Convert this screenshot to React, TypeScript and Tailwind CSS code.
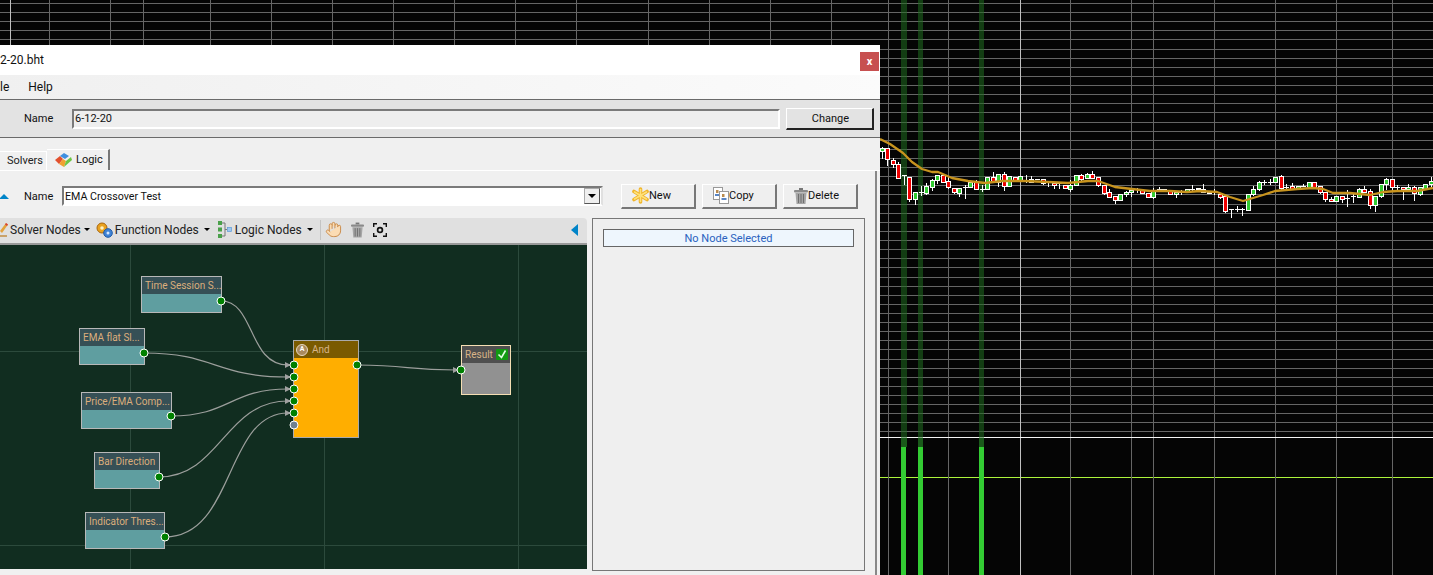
import type { ReactNode } from 'react';
import { Hand } from 'lucide-react';

type Candle = [string, number, number, number, number];

// kind, body top, body bottom, wick top, wick bottom (in 3x crop units, y offset from 130)
const candles: Candle[] = [
  ['g', 55, 62, 50, 88], ['r', 55, 88, 55, 108], ['r', 91, 103, 85, 113], ['r', 103, 143, 97, 148],
  ['d', 136, 138, 136, 165], ['r', 142, 208, 142, 215], ['g', 187, 208, 187, 224], ['d', 187, 189, 168, 197],
  ['g', 168, 188, 160, 195], ['g', 151, 170, 148, 183], ['g', 136, 151, 136, 162], ['r', 136, 155, 136, 155],
  ['r', 154, 172, 140, 178], ['r', 175, 187, 175, 192], ['g', 175, 188, 175, 200], ['d', 172, 174, 165, 207],
  ['g', 157, 172, 155, 175], ['r', 157, 178, 150, 180], ['d', 178, 180, 165, 185], ['g', 142, 178, 142, 178],
  ['r', 142, 155, 127, 160], ['g', 133, 155, 133, 170], ['r', 133, 168, 125, 183], ['g', 139, 169, 139, 170],
  ['r', 142, 153, 142, 153], ['g', 139, 153, 139, 153], ['d', 151, 153, 135, 160], ['g', 146, 155, 138, 160],
  ['d', 146, 151, 146, 151], ['r', 148, 160, 148, 165], ['d', 155, 160, 155, 170], ['r', 158, 165, 158, 177],
  ['d', 160, 163, 160, 177], ['r', 166, 175, 166, 175], ['g', 166, 176, 150, 186], ['g', 136, 166, 136, 166],
  ['r', 136, 146, 133, 155], ['g', 133, 143, 130, 147], ['r', 133, 143, 124, 148], ['r', 142, 166, 142, 170],
  ['r', 166, 188, 166, 195], ['r', 187, 200, 178, 205], ['r', 199, 211, 199, 222], ['g', 193, 211, 193, 211],
  ['g', 187, 193, 183, 200], ['g', 181, 187, 175, 200], ['d', 178, 181, 175, 188], ['r', 181, 190, 181, 190],
  ['r', 190, 200, 190, 205], ['g', 184, 200, 175, 208], ['d', 178, 181, 170, 185], ['d', 178, 185, 178, 185],
  ['r', 183, 193, 183, 193], ['g', 185, 192, 185, 205], ['d', 185, 187, 180, 195], ['g', 178, 185, 178, 185],
  ['d', 178, 181, 165, 183], ['d', 175, 181, 175, 181], ['r', 176, 186, 163, 186], ['d', 183, 193, 183, 193],
  ['d', 185, 187, 178, 195], ['r', 192, 200, 192, 208], ['r', 199, 242, 199, 248], ['d', 238, 240, 238, 263],
  ['d', 238, 240, 228, 245], ['d', 238, 240, 235, 258], ['g', 193, 241, 193, 241], ['g', 178, 193, 168, 197],
  ['g', 157, 178, 154, 183], ['d', 157, 160, 150, 165], ['d', 157, 160, 148, 165], ['g', 142, 157, 142, 157],
  ['r', 139, 173, 136, 180], ['d', 170, 172, 163, 178], ['r', 169, 176, 160, 176], ['g', 169, 176, 169, 176],
  ['d', 167, 169, 162, 172], ['g', 157, 170, 157, 170], ['r', 157, 170, 157, 170], ['r', 169, 187, 169, 192],
  ['r', 187, 208, 187, 215], ['r', 208, 214, 200, 217], ['g', 199, 214, 199, 214], ['r', 199, 208, 199, 218],
  ['d', 203, 205, 180, 230], ['d', 198, 200, 190, 218], ['g', 178, 200, 175, 205], ['r', 178, 187, 168, 190],
  ['r', 184, 224, 178, 237], ['g', 199, 224, 199, 245], ['g', 163, 199, 163, 205], ['g', 148, 163, 145, 180],
  ['r', 148, 170, 148, 185], ['d', 170, 172, 165, 185], ['r', 172, 178, 172, 210], ['g', 172, 178, 163, 178],
  ['r', 172, 190, 168, 213], ['g', 172, 193, 172, 197], ['g', 163, 176, 163, 180], ['g', 154, 163, 141, 170],
];

const emaPoints = [
  [880, 139], [890, 144], [903, 153], [912, 162], [922, 169], [932, 172], [938, 172], [952, 178], [968, 181],
  [985, 183], [1002, 181], [1025, 181], [1048, 182], [1068, 183], [1088, 181], [1098, 181], [1115, 187],
  [1132, 189], [1150, 191], [1170, 191], [1187, 192], [1200, 191], [1217, 192], [1230, 197], [1243, 201],
  [1253, 198], [1263, 195], [1275, 191], [1297, 189], [1313, 188], [1323, 189], [1333, 193], [1350, 193],
  [1370, 195], [1383, 192], [1397, 191], [1417, 191], [1433, 188],
];

const vLines = [49, 110, 143, 210, 271, 332, 393, 454, 515, 576, 648, 709, 770, 831, 888, 948, 1070, 1131, 1153, 1214, 1275, 1336, 1392];

function Chart() {
  const hLines = Array.from({ length: 48 }, (_, i) => Math.round(3 + i * 9.117) + 0.5);
  return (
    <svg className="absolute inset-0" width={1433} height={575}>
      {hLines.map((y) => (
        <line key={y} x1={0} x2={1433} y1={y} y2={y} stroke="#666" />
      ))}
      <line x1={0} x2={1433} y1={477.5} y2={477.5} stroke="#adf53c" />
      {vLines.map((x) => (
        <line key={x} x1={x + 0.5} x2={x + 0.5} y1={0} y2={575} stroke="#666" />
      ))}
      {[10, 1020].map((x) => (
        <line key={x} x1={x + 0.5} x2={x + 0.5} y1={0} y2={575} stroke="#c0c0c0" />
      ))}
      <line x1={0} x2={1433} y1={437.5} y2={437.5} stroke="#f5f5f5" />
      {[[901, 6], [918, 5], [979, 5]].map(([x, w]) => (
        <g key={x}>
          <rect x={x} y={0} width={w} height={447} fill="#1f6b1f" opacity={0.55} />
          <rect x={x} y={438} width={w} height={9} fill="#1a5a1a" />
          <rect x={x} y={447} width={5} height={128} fill="#33cc33" />
        </g>
      ))}
      {candles.map(([k, bt, bb, wt, wb], i) => {
        const x = Math.round(881.7 + i * 5.545) + 0.5;
        const y = (v: number) => Math.round(130 + v / 3);
        return (
          <g key={i}>
            <line x1={x} x2={x} y1={y(wt)} y2={y(wb)} stroke="#fff" />
            {k === 'd' ? (
              <rect x={x - 2.5} y={y(bt)} width={5} height={Math.max(1, y(bb) - y(bt))} fill="#fff" />
            ) : (
              <rect x={x - 2} y={y(bt) + 0.5} width={4} height={Math.max(1, y(bb) - y(bt))} fill={k === 'r' ? '#ee0000' : '#33cc33'} stroke="#fff" />
            )}
          </g>
        );
      })}
      <polyline points={emaPoints.map((p) => p.join(',')).join(' ')} fill="none" stroke="#c8941e" strokeWidth={2.3} strokeLinejoin="round" />
    </svg>
  );
}

function Caret({ ml }: { ml: string }) {
  return <span className={`${ml} h-0 w-0 border-x-[3px] border-t-[3px] border-x-transparent border-t-black`} />;
}

function ActionButton({ icon, label }: { icon: ReactNode; label: string }) {
  return (
    <button className="flex h-[25px] w-[75px] items-center border-t border-l border-white border-r-2 border-b-2 border-r-[#777] border-b-[#777] bg-[#efefef] pl-[10px]">
      {icon}
      <span className="pt-[2px]">{label}</span>
    </button>
  );
}

function StarIcon() {
  return (
    <svg width="17" height="17" viewBox="0 0 17 17">
      <g stroke="#f0b429" strokeWidth="3.6" strokeLinecap="round">
        <line x1="8.5" y1="2" x2="8.5" y2="15" />
        <line x1="2" y1="4.5" x2="15" y2="12.5" />
        <line x1="2" y1="12.5" x2="15" y2="4.5" />
      </g>
      <g stroke="#ffe27a" strokeWidth="1.6" strokeLinecap="round">
        <line x1="8.5" y1="2.5" x2="8.5" y2="14.5" />
        <line x1="2.5" y1="5" x2="14.5" y2="12" />
        <line x1="2.5" y1="12" x2="14.5" y2="5" />
      </g>
    </svg>
  );
}

function CopyIcon() {
  return (
    <svg width="16" height="17" viewBox="0 0 16 17">
      <rect x="0.5" y="0.5" width="9" height="12" fill="#fff" stroke="#999" />
      <rect x="3" y="3" width="2.5" height="3" fill="#b98b4e" />
      <rect x="2" y="7" width="5" height="2" fill="#5a86c5" />
      <rect x="6.5" y="4.5" width="9" height="12" fill="#fff" stroke="#999" />
      <rect x="9" y="7" width="2.5" height="3" fill="#b98b4e" />
      <rect x="8.5" y="11" width="5" height="2" fill="#5a86c5" />
    </svg>
  );
}

function TrashIcon({ w = 14, h = 16 }: { w?: number; h?: number }) {
  return (
    <svg width={w} height={h} viewBox="0 0 14 16">
      <rect x="5" y="0" width="4" height="2" fill="#777" />
      <rect x="0" y="2" width="14" height="2.5" rx="1" fill="#8a8a8a" />
      <path d="M1.5 5h11l-1 11h-9z" fill="#a5a5a5" />
      <path d="M4.5 6v9M7 6v9M9.5 6v9" stroke="#6f6f6f" strokeWidth="1" />
    </svg>
  );
}

function LogicTabIcon() {
  return (
    <svg width="17" height="15" viewBox="0 0 17 15">
      <path d="M0 7l5-4 3 3-4 5z" fill="#e2502e" />
      <path d="M5 3l4-3 5 3-4 3z" fill="#3f8fe0" />
      <path d="M4 11l4-5 3 2-2 6z" fill="#f0a030" />
      <path d="M9 14l2-6 5-4 1 3z" fill="#6cc644" />
    </svg>
  );
}

function GearsIcon() {
  return (
    <svg width="17" height="16" viewBox="0 0 17 16">
      <circle cx="6" cy="6" r="5" fill="#e9a21f" stroke="#a8660f" />
      <circle cx="6" cy="6" r="1.8" fill="#fff3c4" />
      <circle cx="12" cy="11" r="4.3" fill="#3f83d6" stroke="#1f5aa5" />
      <circle cx="12" cy="11" r="1.5" fill="#d7e9ff" />
    </svg>
  );
}

function LogicNodesIcon() {
  return (
    <svg width="14" height="17" viewBox="0 0 14 17">
      <rect x="0" y="0" width="4" height="4" fill="#4aa04a" />
      <rect x="0" y="6.5" width="4" height="4" fill="#4aa04a" />
      <rect x="0" y="13" width="4" height="4" fill="#4aa04a" />
      <path d="M4 2h3v13H4M7 8.5h2" fill="none" stroke="#777" />
      <rect x="9.5" y="6.5" width="4" height="4" fill="#9cc7ef" stroke="#5f9ad6" strokeWidth="0.7" />
    </svg>
  );
}

function PencilIcon() {
  return (
    <svg width="8" height="15" viewBox="0 0 8 15">
      <path d="M0 9L6 1l2 1.5L2 11z" fill="#e3a23c" />
      <path d="M6 1l2 1.5L7 4 5 2.5z" fill="#d8413a" />
      <path d="M0 13h7v2H0z" fill="#c9a26b" />
    </svg>
  );
}

function FocusIcon() {
  return (
    <svg width="14" height="14" viewBox="0 0 14 14" fill="none" stroke="#111" strokeWidth="1.4">
      <path d="M0.7 4V0.7H4M10 0.7h3.3V4M13.3 10v3.3H10M4 13.3H0.7V10" />
      <circle cx="7" cy="7" r="2.4" strokeWidth="1.7" />
    </svg>
  );
}

function Port({ x, y, grey }: { x: number; y: number; grey?: boolean }) {
  return (
    <span
      className={`absolute h-[9px] w-[9px] -translate-x-1/2 -translate-y-1/2 rounded-full border border-white ${grey ? 'bg-[#708090]' : 'bg-[#008000]'}`}
      style={{ left: x, top: y - 245 }}
    />
  );
}

function GraphNode({ label, x, y, w, h }: { label: string; x: number; y: number; w: number; h: number }) {
  return (
    <div
      className="absolute flex flex-col border border-[#b8b8b8] bg-[#5f9ea0]"
      style={{ left: x, top: y - 245, width: w, height: h }}
    >
      <div className="flex h-[17px] items-center whitespace-nowrap bg-[#365056] pl-[3px] text-[10px] text-[#dcae7c]">{label}</div>
    </div>
  );
}

const wires = [
  'M221 301C255 301 248 365 288 365',
  'M144 353C215 353 215 377 288 377',
  'M171 416C230 416 230 389 288 389',
  'M159 477C220 477 225 401 288 401',
  'M165 537C235 537 225 413 288 413',
  'M357 365C410 365 405 370 456 370',
];

function Canvas() {
  return (
    <div className="relative h-[324px] w-[587px] overflow-hidden bg-[#112d20]">
      <svg className="absolute inset-0" width={587} height={324} viewBox="0 245 587 324">
        {[130, 324, 518].map((x) => (
          <line key={x} x1={x + 0.5} x2={x + 0.5} y1={245} y2={569} stroke="#2c4a3c" />
        ))}
        {[351, 545].map((y) => (
          <line key={y} x1={0} x2={587} y1={y + 0.5} y2={y + 0.5} stroke="#2c4a3c" />
        ))}
      </svg>
      <GraphNode label="Time Session S..." x={141} y={276} w={81} h={37} />
      <GraphNode label="EMA flat Sl..." x={79} y={328} w={66} h={37} />
      <GraphNode label="Price/EMA Comp..." x={81} y={392} w={91} h={37} />
      <GraphNode label="Bar Direction" x={94} y={452} w={66} h={37} />
      <GraphNode label="Indicator Thres..." x={85} y={512} w={80} h={37} />

      <div className="absolute left-[293px] top-[95px] flex h-[98px] w-[66px] flex-col border border-[#aaa] bg-[#ffae00]">
        <div className="flex h-[17px] items-center gap-[4px] bg-[#7a5a00] pl-[2px] text-[10px] text-[#d8b488]">
          <span className="flex h-[12px] w-[12px] items-center justify-center rounded-full border border-[#e8d8c0] bg-[#a98a5e] text-[7px] font-bold text-white">A</span>
          And
        </div>
      </div>

      <div className="absolute left-[461px] top-[100px] flex h-[50px] w-[50px] flex-col border border-[#f5deb3] bg-[#919191]">
        <div className="flex h-[17px] items-center gap-[3px] bg-[#4f4f4f] pl-[3px] text-[10px] text-[#d8b488]">
          <span className="-mt-px">Result</span>
          <svg width="12" height="11" viewBox="0 0 12 11">
            <rect width="12" height="11" rx="1" fill="#129a12" />
            <path d="M2.5 5.5l3 3 4-7" fill="none" stroke="#e4ffe4" strokeWidth="1.6" />
          </svg>
        </div>
      </div>

      <svg className="absolute inset-0" width={587} height={324} viewBox="0 245 587 324">
        {wires.map((d) => (
          <path key={d} d={d} fill="none" stroke="#9c9f9c" strokeWidth={1.2} />
        ))}
        {[365, 377, 389, 401, 413].map((y) => (
          <path key={y} d={`M285 ${y - 3}l6 3-6 3z`} fill="#a0a0a0" />
        ))}
        <path d="M453 367l6 3-6 3z" fill="#a0a0a0" />
      </svg>

      {[365, 377, 389, 401, 413].map((y) => (
        <Port key={y} x={294} y={y} />
      ))}
      <Port x={294} y={425} grey />
      <Port x={357} y={365} />
      <Port x={461} y={370} />
      <Port x={221} y={301} />
      <Port x={144} y={353} />
      <Port x={171} y={416} />
      <Port x={159} y={477} />
      <Port x={165} y={537} />
    </div>
  );
}

export default function App() {
  return (
    <div className="relative h-[575px] w-[1433px] overflow-hidden bg-[#050505] font-['Roboto',sans-serif] text-[11px] text-[#111]">
      <Chart />

      {/* Dialog window */}
      <div className="absolute left-0 top-[45px] flex h-[530px] w-[880px] flex-col bg-[#f0f0f0]">
        <div className="flex h-[30px] items-start justify-between bg-white">
          <span className="mt-[6px] text-[12px] leading-[18px]">2-20.bht</span>
          <span className="mr-px mt-[7px] flex h-[19px] w-[19px] items-center justify-center bg-[#c75050] text-[11px] font-bold leading-none text-white">x</span>
        </div>

        <div className="flex h-[24px] items-center gap-[19px] bg-gradient-to-r from-[#f0f0f0] to-[#fbfbfb] text-[12px]">
          <span>le</span>
          <span>Help</span>
        </div>

        <div className="flex h-[39px] items-center border-y border-[#6a6a6a] bg-[#e3e3e3] pl-[24px]">
          <span className="w-[48px] pt-[2px]">Name</span>
          <div className="flex h-[20px] w-[708px] items-center border-2 border-t-[#7a7a7a] border-l-[#7a7a7a] border-r-white border-b-white bg-[#eeeeee] pl-[1px] pt-[2px]">6-12-20</div>
          <button className="ml-[6px] h-[22px] w-[88px] border-t border-l border-white border-r-2 border-b-2 border-r-[#222] border-b-[#222] bg-[#e3e3e3] pt-[2px] pl-[2px]">Change</button>
        </div>

        <div className="flex h-[32px] items-end">
          <div className="flex h-[19px] w-[47px] items-center border-t border-r border-white pl-[7px] text-[#222]">Solvers</div>
          <div className="flex h-[21px] w-[63px] items-center gap-[4px] border-t border-white border-r-2 border-r-[#777] pl-[8px]">
            <LogicTabIcon />
            Logic
          </div>
        </div>

        <div className="flex min-h-0 flex-1 flex-col border-t border-white pr-[3px]">
          <div className="flex flex-1 flex-col border-r-2 border-[#888]">
            <div className="flex h-[47px] items-center pt-[3px]">
              <span className="mr-[15px] h-0 w-0 border-x-[5px] border-b-[5px] border-x-transparent border-b-[#0084c8] -ml-px" />
              <span className="w-[38px] pt-[2px]">Name</span>
              <div className="flex h-[20px] w-[541px] items-center justify-between border-2 border-t-[#7a7a7a] border-l-[#7a7a7a] border-r-[#e0e0e0] border-b-white bg-white pl-[1px]">
                <span className="pt-[2px] text-[10.7px]">EMA Crossover Test</span>
                <span className="mr-px flex h-[16px] w-[16px] items-center justify-center border border-[#aaa] border-r-[#555] border-b-[#555] bg-[#efefef]">
                  <span className="h-0 w-0 border-x-[4px] border-t-[4px] border-x-transparent border-t-black" />
                </span>
              </div>
              <div className="ml-[18px] flex gap-[6px]">
                <ActionButton icon={<StarIcon />} label="New" />
                <ActionButton icon={<CopyIcon />} label="Copy" />
                <ActionButton icon={<TrashIcon />} label="Delete" />
              </div>
            </div>

            <div className="flex flex-1 items-start">
              <div className="flex w-[587px] flex-col">
                <div className="flex h-[27px] items-center rounded-tr-[4px] border-b-2 border-[#999] bg-[#e0e0e0] pb-[2px] text-[12px] text-[#222]">
                  <PencilIcon />
                  <span className="ml-[2px]">Solver Nodes</span>
                  <Caret ml="ml-[3px]" />
                  <span className="ml-[6px]"><GearsIcon /></span>
                  <span className="ml-[2px]">Function Nodes</span>
                  <Caret ml="ml-[5px]" />
                  <span className="ml-[8px]"><LogicNodesIcon /></span>
                  <span className="ml-[3px]">Logic Nodes</span>
                  <Caret ml="ml-[5px]" />
                  <span className="ml-[7px] h-[20px] w-px bg-[#c4c4c4]" />
                  <Hand size={17} strokeWidth={1.4} className="ml-[4px] fill-[#fbdcb4] text-[#c98c4c]" />
                  <span className="ml-[9px]"><TrashIcon w={13} h={16} /></span>
                  <span className="ml-[9px]"><FocusIcon /></span>
                  <span className="ml-auto mr-[9px] h-0 w-0 border-y-[6px] border-r-[7px] border-y-transparent border-r-[#0084c8]" />
                </div>
                <Canvas />
              </div>

              <div className="ml-[5px] h-[353px] w-[273px] border border-[#777] bg-[#efefef] pl-[10px] pt-[10px]">
                <div className="flex h-[18px] w-[251px] items-center justify-center border border-[#666] bg-[#eef6fd] pt-[2px] text-[#2a62c0]">No Node Selected</div>
              </div>
            </div>
          </div>
        </div>
      </div>
    </div>
  );
}
